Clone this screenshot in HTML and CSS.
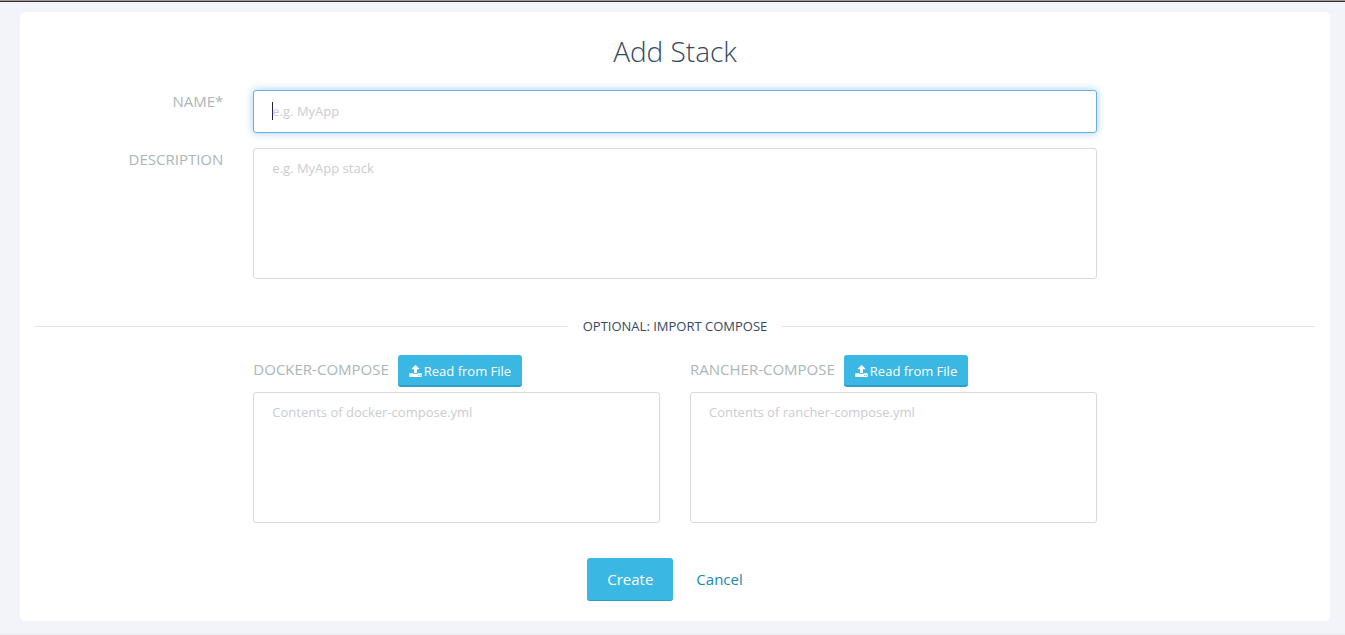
FILE: index.html
```html
<!DOCTYPE html>
<html lang="en">
<head>
<meta charset="utf-8">
<title>Add Stack</title>
<link rel="stylesheet" href="styles.css">
</head>
<body>
<svg class="sprite" aria-hidden="true">
  <symbol id="upload" viewBox="64 64 1664 1600">
    <path d="M1344 1472q0-26-19-45t-45-19-45 19-19 45 19 45 45 19 45-19 19-45zm256 0q0-26-19-45t-45-19-45 19-19 45 19 45 45 19 45-19 19-45zm128-224v320q0 40-28 68t-68 28h-1472q-40 0-68-28t-28-68v-320q0-40 28-68t68-28h427q21 56 70.500 92t110.500 36h256q61 0 110.500-36t70.500-92h427q40 0 68 28t28 68zm-325-648q-17 40-59 40h-256v448q0 26-19 45t-45 19h-256q-26 0-45-19t-19-45v-448h-256q-42 0-59-40-17-39 14-69l448-448q18-19 45-19t45 19l448 448q31 30 14 69z"/>
  </symbol>
</svg>
<main class="page">
  <form class="panel">
    <h1 class="title">Add Stack</h1>
    <div class="row">
      <label class="label side-label" for="name">NAME*</label>
      <input class="field name-field" id="name" type="text" placeholder="e.g. MyApp" autofocus>
    </div>
    <div class="row">
      <label class="label side-label" for="description">DESCRIPTION</label>
      <textarea class="field area wide" id="description" placeholder="e.g. MyApp stack"></textarea>
    </div>
    <div class="divider"><span>OPTIONAL: IMPORT COMPOSE</span></div>
    <div class="row">
      <div class="compose compose-first">
        <div class="compose-head">
          <label class="label" for="docker">DOCKER-COMPOSE</label>
          <button class="read" type="button"><svg class="icon" aria-hidden="true"><use href="#upload"/></svg>Read from File</button>
        </div>
        <textarea class="field area" id="docker" placeholder="Contents of docker-compose.yml"></textarea>
      </div>
      <div class="compose">
        <div class="compose-head">
          <label class="label" for="rancher">RANCHER-COMPOSE</label>
          <button class="read" type="button"><svg class="icon" aria-hidden="true"><use href="#upload"/></svg>Read from File</button>
        </div>
        <textarea class="field area" id="rancher" placeholder="Contents of rancher-compose.yml"></textarea>
      </div>
    </div>
    <div class="actions">
      <button class="create" type="submit">Create</button>
      <button class="cancel" type="button">Cancel</button>
    </div>
  </form>
</main>
</body>
</html>
```

FILE: styles.css
```css
* {
  box-sizing: border-box;
}

body {
  margin: 0;
  background: #f3f4f9;
  color: #34495e;
  font-family: "Open Sans", "Liberation Sans", sans-serif;
  font-size: 13px;
  line-height: 20px;
  border-top: 1px solid #a39a98;
}

.sprite {
  display: none;
}

.page {
  padding: 10px 15px 12px 20px;
  border-top: 1px solid #2c2a33;
  border-bottom: 1px solid #eceef3;
}

.panel {
  padding: 19px 15px 20px;
  border-radius: 5px;
  background: #fff;
}

.title {
  margin: 0 0 19px;
  font-size: 28px;
  font-weight: 300;
  line-height: 40px;
  text-align: center;
}

.row {
  display: grid;
  grid-template-columns: repeat(12, minmax(0, 1fr));
  column-gap: 30px;
  margin-bottom: 15px;
}

.label {
  color: #a9b7b7;
  font-size: 15px;
}

.side-label {
  grid-column: span 2;
  padding-top: 1px;
  text-align: right;
}

.field {
  display: block;
  width: 100%;
  margin: 0;
  padding: 9px 18px;
  border: 1px solid #d9dadd;
  border-radius: 3px;
  outline: 0;
  background: #fff;
  color: #34495e;
  font: inherit;
  resize: none;
}

.field::placeholder {
  color: #cbccd1;
  opacity: 1;
}

.name-field {
  grid-column: span 8;
  height: 43px;
  padding-bottom: 11px;
  caret-color: #20243a;
}

.name-field:focus {
  border-color: #66afe9;
  box-shadow: 0 0 8px rgba(102, 175, 233, 0.6);
}

/* Text cursor of the empty, focused box */
.name-field:focus:placeholder-shown {
  caret-color: transparent;
  background: linear-gradient(#20243a, #20243a) 18px 11px / 1px 18px no-repeat #fff;
}

.area {
  height: 131px;
}

.wide {
  grid-column: span 8;
}

.divider {
  display: flex;
  align-items: center;
  gap: 15px;
  margin: 37px 0 19px;
}

.divider::before,
.divider::after {
  content: "";
  flex: 1;
  border-top: 1px solid #e3e2f0;
}

.compose {
  grid-column: span 4;
}

.compose-first {
  grid-column: 3 / span 4;
}

.compose-head {
  display: flex;
  align-items: center;
  gap: 9px;
  margin-bottom: 5px;
}

.compose-head .label {
  padding-bottom: 4px;
}

.read,
.create,
.cancel {
  border: 0;
  border-radius: 3px;
  font: inherit;
  cursor: pointer;
}

.read {
  display: flex;
  align-items: center;
  gap: 2px;
  height: 32px;
  padding: 2px 11px 0;
  border-bottom: 2px solid #2a9fc9;
  background: #3ab7e3;
  color: #fff;
}

.icon {
  width: 13px;
  height: 12px;
  fill: currentColor;
}

.actions {
  display: flex;
  justify-content: center;
  gap: 3px;
  margin-top: 35px;
}

.create,
.cancel {
  height: 43px;
  padding: 0 20px;
  border-bottom: 1px solid transparent;
  font-size: 15px;
}

.create {
  border-bottom-color: #2a9fc9;
  background: #3ab7e3;
  color: #fff;
}

.cancel {
  padding-bottom: 1px;
  background: none;
  color: #2188b3;
}
```
